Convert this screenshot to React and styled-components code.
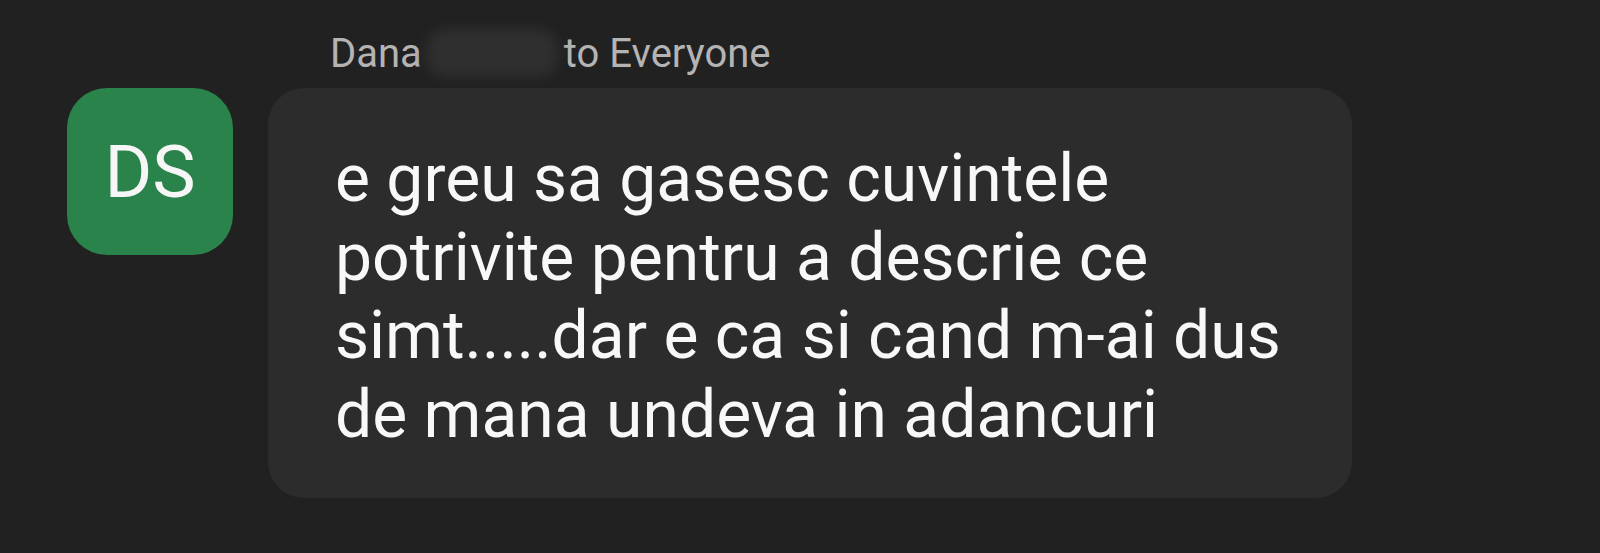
import React from "react";
import styled, { createGlobalStyle } from "styled-components";

const Global = createGlobalStyle`
  html, body {
    margin: 0;
    padding: 0;
    background: #212121;
  }
  body {
    font-family: Roboto, "Noto Sans", "Liberation Sans", sans-serif;
  }
`;

const Page = styled.div`
  width: 1600px;
  height: 553px;
  box-sizing: border-box;
  padding: 29px 0 0 67px;
  background: #212121;
  overflow: hidden;
`;

const Message = styled.div`
  display: grid;
  grid-template-columns: 166px 1084px;
  grid-template-rows: 48px auto;
  column-gap: 35px;
  row-gap: 11px;
`;

const Sender = styled.div`
  grid-column: 2;
  height: 48px;
  padding-left: 62px;
  font-size: 40px;
  line-height: 48px;
  color: #b4b4b4;
  white-space: nowrap;
`;

const Redacted = styled.span`
  display: inline-block;
  width: 132px;
  height: 48px;
  margin: 0 6px 0 4px;
  vertical-align: -10px;
  border-radius: 20px;
  background: #2f2f2f;
  filter: blur(6px);
`;

const Avatar = styled.div`
  width: 166px;
  height: 167px;
  border-radius: 40px;
  background: #29834a;
  color: #f6f6f6;
  font-size: 73px;
  display: flex;
  align-items: center;
  justify-content: center;
`;

const Bubble = styled.div`
  box-sizing: border-box;
  width: 1084px;
  height: 410px;
  padding: 52px 30px 0 67px;
  border-radius: 36px;
  background: #2c2c2c;
  color: #f8f8f8;
  font-size: 66px;
  line-height: 78.5px;
`;

const Line = styled.div`
  white-space: nowrap;
`;

const lines = [
  "e greu sa gasesc cuvintele",
  "potrivite pentru a descrie ce",
  "simt.....dar e ca si cand m-ai dus",
  "de mana undeva in adancuri",
];

export default function App() {
  return (
    <>
      <Global />
      <Page>
        <Message>
          <Sender>
            Dana<Redacted />to Everyone
          </Sender>
          <Avatar>DS</Avatar>
          <Bubble>
            {lines.map((l) => (
              <Line key={l}>{l}</Line>
            ))}
          </Bubble>
        </Message>
      </Page>
    </>
  );
}
